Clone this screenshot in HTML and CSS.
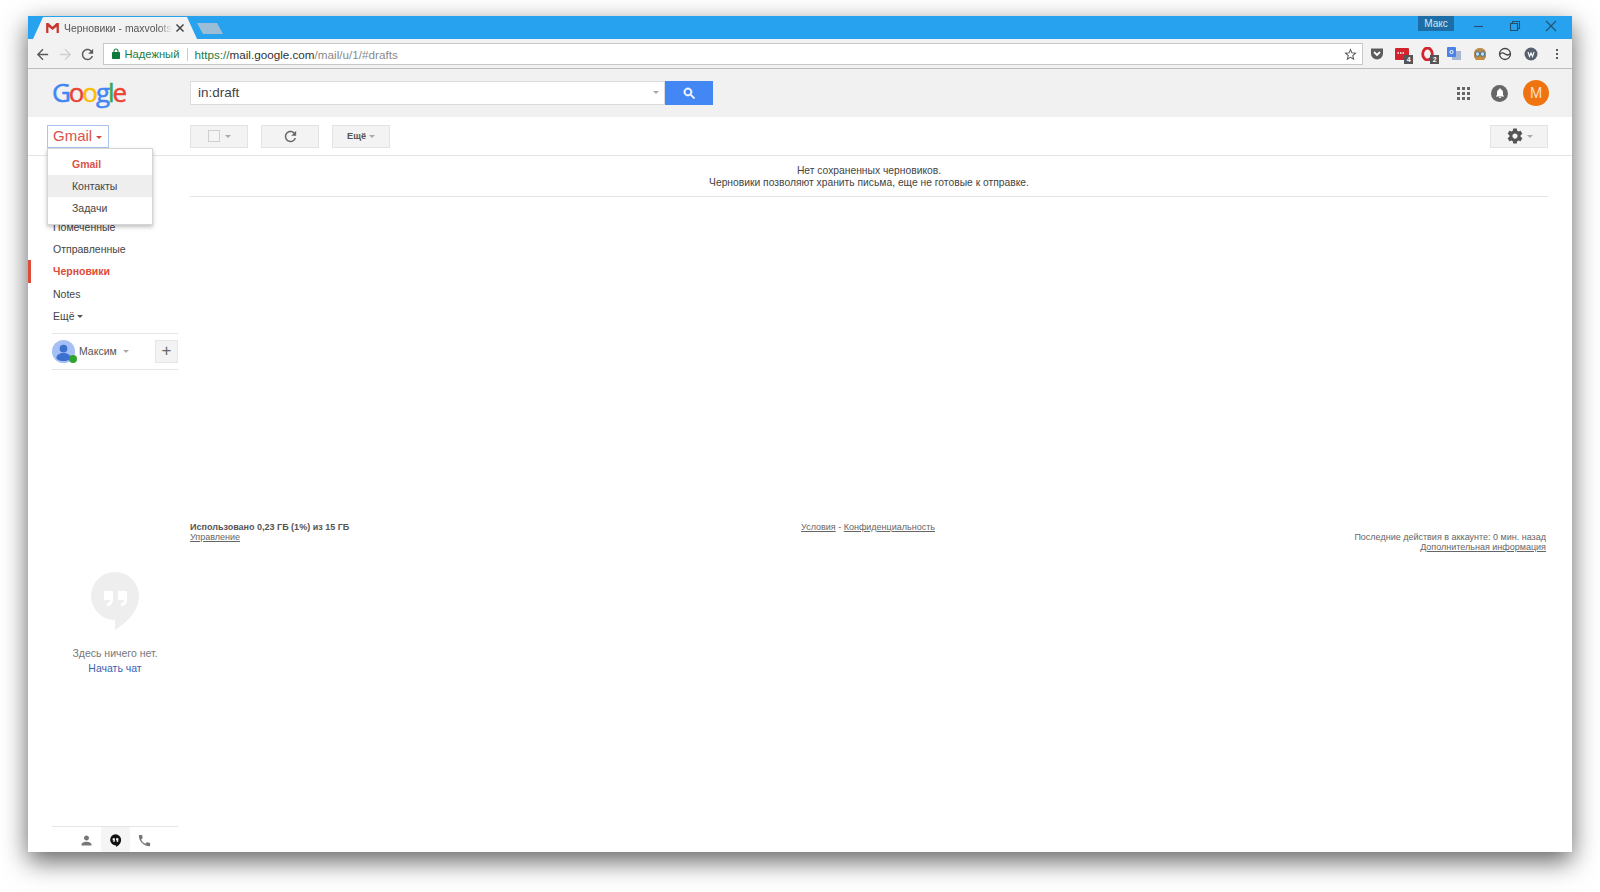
FILE: index.html
```html
<!doctype html>
<html lang="ru">
<head>
	<title>Черновики - Gmail</title>
	<link rel="stylesheet" href="styles.css">
</head>
<body>
<div class="window">

	<!--Tabs-->
	<div class="tabbar">
		<div class="tab">
			<svg class="tab_icon" viewBox="0 0 14 11"><path d="M0 0h2.500L7 4 11.500 0H14v11h-2.500V4L7 7.800 2.500 4v7H0z" fill="#c8372d"/></svg>
			<span class="tab_title">Черновики - maxvolotsk</span>
			<svg class="tab_close" viewBox="0 0 10 10"><path d="M1.500 1.500l7 7M8.500 1.500l-7 7" stroke="#444" stroke-width="1.500"/></svg>
		</div>
		<div class="newtab"></div>
		<div class="profile">Макс</div>
		<div class="winbtns">
			<svg viewBox="0 0 12 12"><path d="M1 6.500h9" stroke="#24506f" stroke-width="1.100"/></svg>
			<svg viewBox="0 0 12 12"><path d="M1.500 3.500h7v7h-7zM3.500 3.500v-2h7v7h-2" fill="none" stroke="#24506f" stroke-width="1.100"/></svg>
			<svg viewBox="0 0 12 12"><path d="M1 1l10 10M11 1L1 11" stroke="#24506f" stroke-width="1.100"/></svg>
		</div>
	</div>

	<!--Address bar-->
	<div class="urlbar">
		<svg class="nav_icon" viewBox="0 0 24 24"><path d="M20 11H7.830l5.590-5.590L12 4l-8 8 8 8 1.410-1.410L7.830 13H20v-2z" fill="#5a5a5a"/></svg>
		<svg class="nav_icon" viewBox="0 0 24 24"><path d="M4 11h12.170l-5.590-5.590L12 4l8 8-8 8-1.410-1.410L16.170 13H4v-2z" fill="#d0d0d0"/></svg>
		<svg class="nav_icon" viewBox="0 0 24 24"><path d="M17.650 6.350C16.200 4.900 14.210 4 12 4c-4.420 0-7.990 3.580-7.990 8s3.570 8 7.990 8c3.730 0 6.840-2.550 7.730-6h-2.080c-.82 2.330-3.040 4-5.650 4-3.310 0-6-2.690-6-6s2.690-6 6-6c1.660 0 3.140.69 4.220 1.780L13 11h7V4l-2.350 2.350z" fill="#5a5a5a"/></svg>
		<div class="omnibox">
			<svg class="lock" viewBox="0 0 24 24"><path d="M18 8h-1V6c0-2.760-2.240-5-5-5S7 3.240 7 6v2H6c-1.100 0-2 .9-2 2v10c0 1.100.9 2 2 2h12c1.100 0 2-.9 2-2V10c0-1.100-.9-2-2-2zM9 6c0-1.660 1.340-3 3-3s3 1.340 3 3v2H9V6z" fill="#0b7a3b"/></svg>
			<span class="secure">Надежный</span>
			<span class="url"><span class="secure">https://</span><b>mail.google.com</b>/mail/u/1/#drafts</span>
			<svg class="star" viewBox="0 0 24 24"><path d="M22 9.240l-7.190-.62L12 2 9.190 8.630 2 9.240l5.460 4.730L5.820 21 12 17.270 18.180 21l-1.630-7.030L22 9.240zM12 15.400l-3.760 2.270 1-4.280-3.320-2.880 4.380-.38L12 6.100l1.710 4.040 4.380.38-3.320 2.880 1 4.280L12 15.400z" fill="#555"/></svg>
		</div>
		<div class="ext_icons">
			<span class="ext"><svg viewBox="0 0 14 14"><path d="M1 1.500h12v5a6 6 0 0 1-12 0z" fill="#5c5c5c"/><path d="M4 5l3 3 3-3" fill="none" stroke="#fff" stroke-width="1.800"/></svg></span>
			<span class="ext"><svg viewBox="0 0 14 14"><rect y="1" width="14" height="12" rx="1" fill="#d3232e"/><path d="M2.500 6h1.500M5 6h1.500M7.500 6H9" stroke="#fff" stroke-width="1.500"/></svg><i class="ext_badge">4</i></span>
			<span class="ext"><svg viewBox="0 0 14 14"><ellipse cx="6.500" cy="7" rx="4.800" ry="6" fill="none" stroke="#d3232e" stroke-width="2.800"/></svg><i class="ext_badge">2</i></span>
			<span class="ext"><svg viewBox="0 0 14 14"><rect x="5" y="4" width="9" height="9" fill="#a9b8d2"/><rect width="9" height="10" rx="1" fill="#4a82e8"/><circle cx="4.500" cy="5" r="1.600" fill="none" stroke="#fff"/></svg></span>
			<span class="ext"><svg viewBox="0 0 14 14"><path d="M1 6a6 5 0 0 1 12 0v4l-2 3H3l-2-3z" fill="#b98a4a"/><circle cx="4.500" cy="7" r="2.300" fill="#bcd6ea" stroke="#48708f"/><circle cx="9.500" cy="7" r="2.300" fill="#bcd6ea" stroke="#48708f"/><path d="M5 12h4" stroke="#e08a2c" stroke-width="1.500"/></svg></span>
			<span class="ext"><svg viewBox="0 0 14 14"><circle cx="7" cy="7" r="5.500" fill="none" stroke="#444" stroke-width="1.300"/><path d="M1.500 7.500c2-2.500 3.500-2 5.500-.5s3.500 1.500 5.500-.5" fill="none" stroke="#444" stroke-width="1.300"/></svg></span>
			<span class="ext"><svg viewBox="0 0 14 14"><circle cx="7" cy="7" r="6.500" fill="#56606e"/><path d="M4 5l1.500 4.500L7 6l1.500 3.500L10 5" fill="none" stroke="#fff" stroke-width="1.100"/></svg></span>
			<span class="ext"><svg viewBox="0 0 14 14"><path d="M7 2v2M7 6v2M7 10v2" stroke="#5a5a5a" stroke-width="2"/></svg></span>
		</div>
	</div>

	<!--Gmail header-->
	<div class="gm_head">
		<div class="logo"><span class="c_b">G</span><span class="c_r">o</span><span class="c_y">o</span><span class="c_b">g</span><span class="c_g">l</span><span class="c_r">e</span></div>
		<div class="searchbox">
			<span class="query">in:draft</span>
			<span class="caret caret_light"></span>
		</div>
		<div class="searchbtn">
			<svg viewBox="0 0 24 24"><path d="M15.500 14h-.79l-.28-.27C15.410 12.590 16 11.110 16 9.500 16 5.910 13.090 3 9.500 3S3 5.910 3 9.500 5.910 16 9.500 16c1.610 0 3.090-.59 4.230-1.570l.27.28v.79l5 4.990L20.490 19l-4.990-5zm-6 0C7.010 14 5 11.990 5 9.500S7.010 5 9.500 5 14 7.010 14 9.500 11.990 14 9.500 14z" fill="#fff" stroke="#fff"/></svg>
		</div>
		<div class="head_right">
			<div class="apps">
				<i></i><i></i><i></i><i></i><i></i><i></i><i></i><i></i><i></i>
			</div>
			<div class="bell">
				<svg viewBox="0 0 24 24"><path d="M12 22c1.100 0 2-.9 2-2h-4c0 1.100.89 2 2 2zm6-6v-5c0-3.070-1.640-5.640-4.500-6.320V4c0-.83-.67-1.500-1.500-1.500s-1.500.67-1.500 1.500v.68C7.630 5.360 6 7.920 6 11v5l-2 2v1h16v-1l-2-2z" fill="#fff"/></svg>
			</div>
			<div class="avatar">M</div>
		</div>
	</div>

	<!--Action buttons-->
	<div class="actions">
		<div class="app_cell">
			<div class="app_btn">Gmail <span class="caret caret_red"></span></div>
			<div class="app_menu">
				<div class="app_item app_on">Gmail</div>
				<div class="app_item app_hover">Контакты</div>
				<div class="app_item">Задачи</div>
			</div>
		</div>
		<div class="btn btn_check"><span class="checkbox"></span><span class="caret caret_light"></span></div>
		<div class="btn btn_refresh">
			<svg viewBox="0 0 24 24"><path d="M17.650 6.350C16.200 4.900 14.210 4 12 4c-4.420 0-7.990 3.580-7.990 8s3.570 8 7.990 8c3.730 0 6.840-2.550 7.730-6h-2.080c-.82 2.330-3.040 4-5.650 4-3.310 0-6-2.690-6-6s2.690-6 6-6c1.660 0 3.140.69 4.220 1.780L13 11h7V4l-2.350 2.350z" fill="#666"/></svg>
		</div>
		<div class="btn btn_more">Ещё <span class="caret caret_light"></span></div>
		<div class="btn btn_gear">
			<svg viewBox="0 0 24 24"><path d="M19.430 12.980c.04-.32.07-.64.07-.98s-.03-.66-.07-.98l2.110-1.650c.19-.15.24-.42.12-.64l-2-3.460c-.12-.22-.39-.3-.61-.22l-2.490 1c-.52-.4-1.080-.73-1.690-.98l-.38-2.650C14.460 2.180 14.250 2 14 2h-4c-.25 0-.46.18-.49.42l-.38 2.650c-.61.25-1.170.59-1.690.98l-2.490-1c-.23-.09-.49 0-.61.22l-2 3.460c-.13.22-.07.49.12.64l2.110 1.650c-.04.32-.07.65-.07.98s.03.66.07.98l-2.110 1.650c-.19.15-.24.42-.12.64l2 3.460c.12.22.39.3.61.22l2.490-1c.52.4 1.080.73 1.690.98l.38 2.650c.03.24.24.42.49.42h4c.25 0 .46-.18.49-.42l.38-2.650c.61-.25 1.170-.59 1.690-.98l2.490 1c.23.09.49 0 .61-.22l2-3.460c.12-.22.07-.49-.12-.64l-2.110-1.650zM12 15.500c-1.930 0-3.500-1.570-3.500-3.500s1.570-3.500 3.500-3.500 3.500 1.570 3.500 3.500-1.570 3.500-3.500 3.500z" fill="#555"/></svg>
			<span class="caret caret_light"></span>
		</div>
	</div>

	<div class="mail">
		<!--Sidebar-->
		<div class="side">
			<div class="nav">
				<div class="nav_item">Помеченные</div>
				<div class="nav_item">Отправленные</div>
				<div class="nav_item nav_on">Черновики</div>
				<div class="nav_item">Notes</div>
				<div class="nav_item">Ещё <span class="caret caret_dark"></span></div>
			</div>
			<div class="account">
				<div class="acc_pic">
					<svg viewBox="0 0 24 24"><circle cx="12" cy="12" r="12" fill="#a4c0f4"/><circle cx="12" cy="9" r="4" fill="#3d6fd0"/><path d="M4.500 19c0-4 4-5.500 7.500-5.500s7.500 1.500 7.500 5.500c-2 2.500-4.500 3-7.500 3s-5.500-.5-7.500-3z" fill="#3d6fd0"/></svg>
					<i class="online"></i>
				</div>
				<span class="acc_name">Максим</span>
				<span class="caret caret_light"></span>
				<div class="acc_add">+</div>
			</div>
			<div class="hangouts">
				<svg viewBox="0 0 48 58"><path d="M24 0a24 24 0 0 1 24 24c0 14-11 26-24 34V48A24 24 0 0 1 24 0z" fill="#eeeeee"/><path d="M13 19h9v9c0 4-3 6-6 6v-3c2 0 3-1 3-3h-6zM27 19h9v9c0 4-3 6-6 6v-3c2 0 3-1 3-3h-6z" fill="#fff"/></svg>
				<div class="empty">Здесь ничего нет.</div>
				<a class="start_chat">Начать чат</a>
			</div>
			<div class="chat_tabs">
				<span class="chat_tab">
					<svg viewBox="0 0 24 24"><path d="M12 12c2.210 0 4-1.790 4-4s-1.790-4-4-4-4 1.790-4 4 1.790 4 4 4zm0 2c-2.670 0-8 1.340-8 4v2h16v-2c0-2.660-5.330-4-8-4z" fill="#777"/></svg>
				</span>
				<span class="chat_tab chat_tab_on">
					<svg viewBox="0 0 24 24"><path d="M12 2a9 9 0 0 1 9 9c0 5-4 9-8 11.500V20a9 9 0 0 1-1-18z" fill="#111"/><path d="M7.500 8.500h3.500v3.500c0 1.500-1 2.500-2.500 2.500v-1.500c.6 0 1-.4 1-1h-2zM13 8.500h3.500v3.500c0 1.500-1 2.500-2.500 2.500v-1.500c.6 0 1-.4 1-1h-2z" fill="#fff"/></svg>
				</span>
				<span class="chat_tab">
					<svg viewBox="0 0 24 24"><path d="M6.620 10.790c1.440 2.830 3.760 5.140 6.590 6.590l2.200-2.200c.27-.27.67-.36 1.020-.24 1.120.37 2.330.57 3.570.57.55 0 1 .45 1 1V20c0 .55-.45 1-1 1-9.390 0-17-7.610-17-17 0-.55.45-1 1-1h3.500c.55 0 1 .45 1 1 0 1.250.2 2.450.57 3.570.11.35.03.74-.25 1.020l-2.200 2.200z" fill="#777"/></svg>
				</span>
			</div>
		</div>

		<!--Message area-->
		<div class="main">
			<div class="nodrafts">
				Нет сохраненных черновиков.<br>
				Черновики позволяют хранить письма, еще не готовые к отправке.
			</div>
			<div class="foot">
				<div class="foot_col">
					<b>Использовано 0,23 ГБ (1%) из 15 ГБ</b><br>
					<a>Управление</a>
				</div>
				<div class="foot_col foot_mid"><a>Условия</a> - <a>Конфиденциальность</a></div>
				<div class="foot_col foot_right">
					Последние действия в аккаунте: 0 мин. назад<br>
					<a>Дополнительная информация</a>
				</div>
			</div>
		</div>
	</div>
</div>
</body>
</html>
```

FILE: styles.css
```css
*{
	box-sizing: border-box;
}

body{
	margin: 0;
	height: 892px;
	overflow: hidden;
	background-color: #fff;
	font-family: "Liberation Sans", Arial, sans-serif;
	font-size: 10.500px;
	color: #444;
}

svg{
	display: block;
}

a{
	color: inherit;
	text-decoration: underline;
}

.window{
	display: flex;
	flex-direction: column;
	width: 1544px;
	height: 836px;
	margin: 16px 28px 0;
	background-color: #fff;
	box-shadow: 0 9px 24px rgba(0,0,0,.62);
}

/* carets */
.caret{
	display: inline-block;
	width: 0;
	height: 0;
	border-style: solid;
	border-width: 3px 3px 0 3px;
	border-color: #999 transparent transparent transparent;
	vertical-align: middle;
}
.caret_light{
	border-top-color: #aaa;
}
.caret_red{
	border-top-color: #d14836;
}
.caret_dark{
	border-top-color: #555;
}

/* tabs */
.tabbar{
	display: flex;
	flex: none;
	align-items: flex-end;
	height: 23px;
	padding-left: 5px;
	background-color: #27a2ee;
	position: relative;
}
.tab{
	display: flex;
	align-items: center;
	width: 164px;
	height: 22px;
	padding: 0 12px 0 13px;
	background-color: #f2f2f2;
	clip-path: polygon(10px 0, 154px 0, 164px 100%, 0 100%);
}
.tab_icon{
	width: 13px;
	height: 10px;
	margin-right: 5px;
	flex: none;
}
.tab_title{
	width: 108px;
	flex: none;
	overflow: hidden;
	white-space: nowrap;
	color: #555;
	font-size: 10.400px;
	-webkit-mask-image: linear-gradient(to right, #000 88%, transparent);
	mask-image: linear-gradient(to right, #000 88%, transparent);
}
.tab_close{
	width: 10px;
	height: 10px;
	margin-left: auto;
}
.newtab{
	width: 26px;
	height: 11px;
	margin: 0 0 5px 0;
	background-color: #9bbdd6;
	clip-path: polygon(0 0, 20px 0, 26px 100%, 6px 100%);
}
.profile{
	position: absolute;
	top: 0;
	left: 1390px;
	width: 36px;
	height: 15px;
	background-color: #1d6ea6;
	color: #d8e8f2;
	font-size: 10px;
	line-height: 15px;
	text-align: center;
}
.winbtns{
	display: flex;
	gap: 24px;
	margin-left: auto;
	margin-right: 15px;
	margin-bottom: 7px;
}
.winbtns svg{
	width: 12px;
	height: 12px;
}

/* address bar */
.urlbar{
	display: flex;
	flex: none;
	align-items: center;
	height: 30px;
	padding: 1px 0 0 6px;
	background-color: #f2f2f2;
	border-bottom: 1px solid #bdbdbd;
}
.nav_icon{
	flex: none;
	width: 17px;
	height: 17px;
	margin-right: 5.500px;
}
.omnibox{
	display: flex;
	align-items: center;
	flex: none;
	width: 1260px;
	height: 22px;
	margin-left: 1px;
	padding: 0 2px 0 6px;
	background-color: #fff;
	border: 1px solid #c8c8c8;
	font-size: 11.200px;
}
.lock{
	width: 12px;
	height: 12px;
	margin-right: 3px;
}
.secure{
	color: #1c7c45;
}
.url{
	margin-left: 8px;
	padding-left: 6px;
	border-left: 1px solid #ccc;
	color: #8a8a8a;
	font-size: 11.700px;
}
.url b{
	font-weight: normal;
	color: #333;
}
.star{
	width: 15px;
	height: 15px;
	margin-left: auto;
	margin-right: 2px;
}
.ext_icons{
	display: flex;
	gap: 11.800px;
	margin-left: 7px;
}
.ext{
	position: relative;
	display: block;
	flex: none;
	width: 14px;
	height: 14px;
}
.ext svg{
	width: 14px;
	height: 14px;
}
.ext_badge{
	position: absolute;
	left: 9px;
	top: 8px;
	width: 9px;
	height: 9px;
	background-color: #555;
	color: #fff;
	font-size: 7px;
	font-style: normal;
	font-weight: bold;
	line-height: 9px;
	text-align: center;
}

/* gmail header */
.gm_head{
	display: flex;
	flex: none;
	align-items: center;
	height: 48px;
	padding-left: 24px;
	background-color: #f1f1f1;
}
.logo{
	width: 138px;
	margin-top: -2px;
	font-family: "Open Sans", sans-serif;
	font-size: 26px;
	letter-spacing: -2.100px;
	line-height: 32px;
	-webkit-text-stroke: .5px;
}
.c_b{ color: #4285f4; }
.c_r{ color: #ea4335; }
.c_y{ color: #fbbc05; }
.c_g{ color: #34a853; }
.searchbox{
	display: flex;
	align-items: center;
	justify-content: space-between;
	width: 475px;
	height: 24px;
	padding: 0 5px 2px 7px;
	background-color: #fff;
	border: 1px solid #dcdcdc;
}
.query{
	font-size: 13.500px;
	color: #444;
}
.searchbtn{
	display: flex;
	align-items: center;
	justify-content: center;
	width: 48px;
	height: 24px;
	background-color: #4387f5;
}
.searchbtn svg{
	width: 15px;
	height: 15px;
}
.head_right{
	display: flex;
	align-items: center;
	margin-left: auto;
	padding-right: 23px;
}
.apps{
	display: grid;
	grid-template-columns: repeat(3, 3px);
	gap: 2px;
	margin-right: 21px;
}
.apps i{
	width: 3px;
	height: 3px;
	background-color: #666;
}
.bell{
	display: flex;
	align-items: center;
	justify-content: center;
	width: 17px;
	height: 17px;
	margin-right: 15px;
	border-radius: 50%;
	background-color: #666;
}
.bell svg{
	width: 12px;
	height: 12px;
}
.avatar{
	width: 26px;
	height: 26px;
	border-radius: 50%;
	background-color: #ef7410;
	color: #fbdcc0;
	font-family: Roboto, sans-serif;
	font-size: 14px;
	line-height: 26px;
	text-align: center;
}

/* action buttons */
.actions{
	display: flex;
	flex: none;
	align-items: flex-start;
	height: 39px;
	padding-top: 8px;
	border-bottom: 1px solid #e5e5e5;
}
.app_cell{
	position: relative;
	width: 162px;
	padding-left: 19px;
}
.app_btn{
	width: 62px;
	height: 23px;
	padding-left: 5px;
	background-color: #fff;
	border: 1px solid #a9c4ee;
	color: #d9534a;
	font-size: 15px;
	line-height: 20px;
	white-space: nowrap;
}
.app_menu{
	position: absolute;
	left: 19px;
	top: 23px;
	width: 106px;
	height: 77px;
	padding-top: 4px;
	background-color: #fff;
	border: 1px solid #d5d5d5;
	box-shadow: 0 2px 4px rgba(0,0,0,.25);
	z-index: 5;
}
.app_item{
	height: 22px;
	padding-left: 24px;
	line-height: 22px;
	color: #444;
}
.app_on{
	color: #d9534a;
	font-weight: bold;
}
.app_hover{
	background-color: #eeeeee;
}
.btn{
	display: flex;
	align-items: center;
	justify-content: center;
	gap: 5px;
	width: 58px;
	height: 23px;
	padding-bottom: 1px;
	background-color: #f3f3f3;
	border: 1px solid #e3e3e3;
}
.btn_check{
	margin-right: 13px;
}
.btn_refresh{
	margin-right: 13px;
}
.btn_refresh svg{
	width: 17px;
	height: 17px;
}
.btn_more{
	font-size: 9.200px;
	font-weight: bold;
	color: #555;
	gap: 3px;
}
.btn_gear{
	margin-left: auto;
	margin-right: 24px;
	gap: 3px;
}
.btn_gear svg{
	width: 18px;
	height: 18px;
}
.checkbox{
	width: 12px;
	height: 12px;
	background-color: #f5f5f5;
	border: 1px solid #cfcfcf;
}

/* sidebar */
.mail{
	display: flex;
	flex: 1;
	min-height: 0;
}
.side{
	display: flex;
	flex-direction: column;
	flex: none;
	width: 162px;
	padding-top: 60px;
}
.nav_item{
	height: 22.200px;
	padding-left: 25px;
	line-height: 22px;
}
.nav_on{
	color: #dd4b39;
	font-weight: bold;
	border-left: 3px solid #dd4b39;
	padding-left: 22px;
}
.account{
	display: flex;
	align-items: center;
	gap: 3px;
	width: 126px;
	height: 37px;
	margin: 6px 0 0 24px;
	border-top: 1px solid #e5e5e5;
	border-bottom: 1px solid #e5e5e5;
}
.acc_pic{
	position: relative;
	width: 23px;
	height: 23px;
	margin-right: 1px;
}
.acc_pic svg{
	width: 23px;
	height: 23px;
}
.online{
	position: absolute;
	left: 17px;
	top: 15px;
	width: 8px;
	height: 8px;
	border-radius: 50%;
	background-color: #2fa52f;
}
.acc_name{
	margin-right: 3px;
	color: #555;
}
.acc_add{
	width: 23px;
	height: 23px;
	margin-left: auto;
	background-color: #f3f3f3;
	border: 1px solid #e5e5e5;
	color: #666;
	font-size: 17px;
	line-height: 20px;
	text-align: center;
}
.hangouts{
	display: flex;
	flex-direction: column;
	align-items: center;
	width: 126px;
	margin: 202px 0 0 24px;
}
.hangouts svg{
	width: 48px;
	height: 58px;
	margin-bottom: 16px;
}
.empty{
	color: #777;
	line-height: 15px;
}
.start_chat{
	color: #3b5fb0;
	line-height: 15px;
	text-decoration: none;
}
.chat_tabs{
	display: flex;
	justify-content: center;
	width: 126px;
	height: 26px;
	margin: auto 0 0 24px;
	border-top: 1px solid #e5e5e5;
}
.chat_tab{
	display: flex;
	align-items: center;
	justify-content: center;
	width: 29px;
	padding-top: 1px;
}
.chat_tab svg{
	width: 15px;
	height: 15px;
}
.chat_tab_on{
	background-color: #f5f5f5;
}

/* main area */
.main{
	flex: 1;
	padding: 9px 24px 0 0;
}
.nodrafts{
	height: 32px;
	border-bottom: 1px solid #e5e5e5;
	font-size: 10.300px;
	line-height: 12px;
	text-align: center;
}
.foot{
	display: grid;
	grid-template-columns: 1fr 1fr 1fr;
	margin-top: 325px;
	font-size: 9px;
	line-height: 10px;
	color: #666;
}
.foot_col b{
	color: #555;
}
.foot_mid{
	text-align: center;
	padding-right: 2px;
}
.foot_right{
	margin-top: 10px;
	padding-right: 2px;
	text-align: right;
}
```
